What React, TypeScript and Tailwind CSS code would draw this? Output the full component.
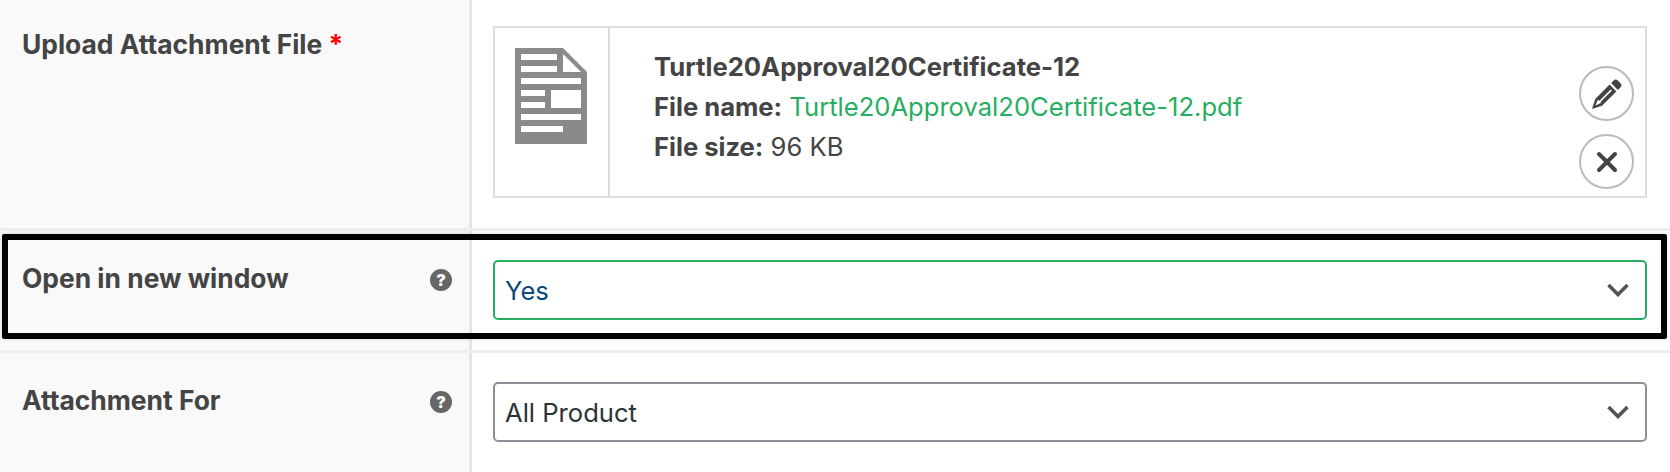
import React from 'react';

const FileIcon = () => (
  <svg width="72" height="96" viewBox="0 0 72 96" className="block">
    <path d="M0 0H48L72 24V96H0Z" fill="#8a8a8a" />
    <path d="M48 6V24H66Z" fill="#fff" />
    <g fill="#fff">
      <rect x="6" y="6" width="36" height="6" />
      <rect x="6" y="18" width="36" height="6" />
      <rect x="6" y="30" width="60" height="6" />
      <rect x="6" y="42" width="24" height="6" />
      <rect x="36" y="42" width="30" height="18" />
      <rect x="6" y="54" width="24" height="6" />
      <rect x="6" y="66" width="60" height="6" />
      <rect x="6" y="78" width="42" height="6" />
    </g>
  </svg>
);

const HelpIcon = () => (
  <span className="flex h-[22px] w-[22px] items-center justify-center rounded-full bg-[#666] font-['Inter',sans-serif] text-[16px] font-black leading-none text-white">
    ?
  </span>
);

const PencilIcon = () => (
  <svg width="32" height="32" viewBox="0 0 32 32">
    <path
      fill="#444"
      d="M22.6 2.6a3 3 0 0 1 4.2 0l2.6 2.6a3 3 0 0 1 0 4.2l-2.5 2.5-6.8-6.8zM18.6 6.6l6.8 6.8L11 27.8 1 31l3.2-10zM7 21.5l-2.6 5.9 6-2.7-1.2-.5 11.7-11.6-1.2-1.2L8.2 23z"
      fillRule="evenodd"
    />
  </svg>
);

const CloseIcon = () => (
  <svg width="22" height="22" viewBox="0 0 22 22">
    <path d="M3 3L19 19M19 3L3 19" stroke="#444" strokeWidth="4" strokeLinecap="round" />
  </svg>
);

const Chevron = () => (
  <svg width="22" height="14" viewBox="0 0 22 14">
    <path d="M1.5 2L11 11.5L20.5 2" fill="none" stroke="#555" strokeWidth="3.6" />
  </svg>
);

const Label = ({ children }: { children: React.ReactNode }) => (
  <span className="font-['Inter',sans-serif] text-[26.4px] font-bold leading-[32px] text-[#444]">{children}</span>
);

const Select = ({ value, active }: { value: string; active?: boolean }) => (
  <div
    className={`flex h-[60px] items-center justify-between rounded-[5px] border-2 pl-[10px] pr-[16px] font-['Inter',sans-serif] text-[25.6px] ${
      active ? 'border-[#27ae60] text-[#0b4a7d]' : 'border-[#8c8f94] text-[#2c3338]'
    }`}
  >
    <span className="pt-[2px]">{value}</span>
    <Chevron />
  </div>
);

const App: React.FC = () => {
  return (
    <div className="relative h-[472px] w-[1670px] overflow-hidden bg-white">
      <div className="flex h-[231px] border-b-[3px] border-[#eee]">
        <div className="w-[472px] border-r-[3px] border-[#e5e5e5] bg-[#f9f9f9] pl-[22px] pt-[28px]">
          <Label>
            Upload Attachment File <span className="text-[#f00]">*</span>
          </Label>
        </div>
        <div className="flex-1 pl-[21px] pr-[23px] pt-[26px]">
          <div className="flex h-[172px] border-2 border-[#ddd]">
            <div className="w-[115px] border-r-2 border-[#ddd] pl-[20px] pt-[20px]">
              <FileIcon />
            </div>
            <div className="flex-1 pl-[44px] pt-[19px] font-['Inter',sans-serif] text-[25.6px] leading-[40px] text-[#444]">
              <div className="font-bold">Turtle20Approval20Certificate-12</div>
              <div>
                <span className="font-bold">File name:</span>{' '}
                <span className="text-[#27ae60]">Turtle20Approval20Certificate-12.pdf</span>
              </div>
              <div>
                <span className="font-bold">File size:</span> 96 KB
              </div>
            </div>
            <div className="flex flex-col gap-[13px] pr-[11px] pt-[38px]">
              <div className="flex h-[55px] w-[55px] items-center justify-center rounded-full border-2 border-[#bbb]">
                <PencilIcon />
              </div>
              <div className="flex h-[55px] w-[55px] items-center justify-center rounded-full border-2 border-[#bbb]">
                <CloseIcon />
              </div>
            </div>
          </div>
        </div>
      </div>

      <div className="flex h-[122px] border-b-[3px] border-[#eee]">
        <div className="flex w-[472px] justify-between border-r-[3px] border-[#e5e5e5] bg-[#f9f9f9] pl-[22px] pr-[17px] pt-[31px]">
          <Label>Open in new window</Label>
          <span className="pt-[7px]">
            <HelpIcon />
          </span>
        </div>
        <div className="flex-1 pl-[21px] pr-[23px] pt-[29px]">
          <Select value="Yes" active />
        </div>
      </div>

      <div className="flex h-[119px]">
        <div className="flex w-[472px] justify-between border-r-[3px] border-[#e5e5e5] bg-[#f9f9f9] pl-[22px] pr-[17px] pt-[31px]">
          <Label>Attachment For</Label>
          <span className="pt-[7px]">
            <HelpIcon />
          </span>
        </div>
        <div className="flex-1 pl-[21px] pr-[23px] pt-[29px]">
          <Select value="All Product" />
        </div>
      </div>

      {/* annotation box drawn over the row */}
      <div className="pointer-events-none absolute left-[2px] top-[234px] h-[105px] w-[1665px] rounded-[2px] border-[6px] border-black shadow-[0_0_4px_rgba(0,0,0,0.15)]" />
    </div>
  );
};

export default App;
